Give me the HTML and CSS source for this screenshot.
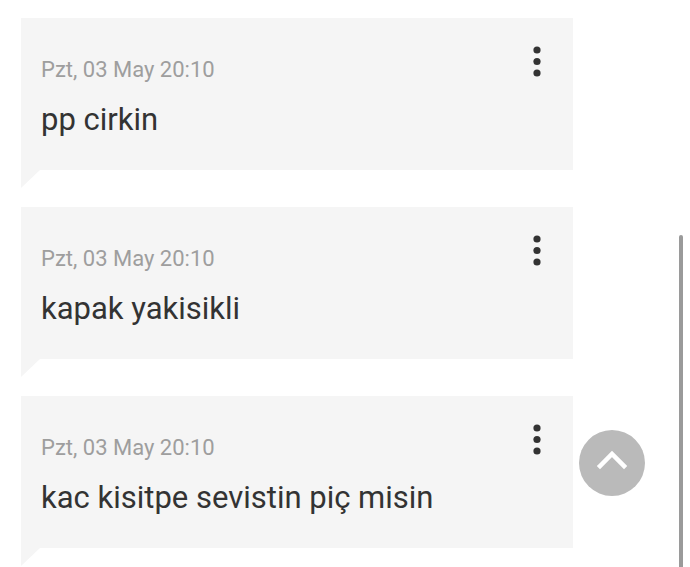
FILE: index.html
```html
<!DOCTYPE html>
<html lang="tr">
<head>
<meta charset="utf-8">
<link rel="stylesheet" href="styles.css">
</head>
<body>
<div class="list">
  <div class="item">
    <div class="card">
      <div class="head">
        <span class="date">Pzt, 03 May 20:10</span>
        <svg class="kebab" width="8" height="32" viewBox="0 0 8 32"><circle cx="4" cy="4" r="3.6"/><circle cx="4" cy="15.5" r="3.6"/><circle cx="4" cy="27" r="3.6"/></svg>
      </div>
      <div class="msg">pp cirkin</div>
    </div>
    <div class="tail"></div>
  </div>
  <div class="item">
    <div class="card">
      <div class="head">
        <span class="date">Pzt, 03 May 20:10</span>
        <svg class="kebab" width="8" height="32" viewBox="0 0 8 32"><circle cx="4" cy="4" r="3.6"/><circle cx="4" cy="15.5" r="3.6"/><circle cx="4" cy="27" r="3.6"/></svg>
      </div>
      <div class="msg">kapak yakisikli</div>
    </div>
    <div class="tail"></div>
  </div>
  <div class="item">
    <div class="card">
      <div class="head">
        <span class="date">Pzt, 03 May 20:10</span>
        <svg class="kebab" width="8" height="32" viewBox="0 0 8 32"><circle cx="4" cy="4" r="3.6"/><circle cx="4" cy="15.5" r="3.6"/><circle cx="4" cy="27" r="3.6"/></svg>
      </div>
      <div class="msg">kac kisitpe sevistin piç misin</div>
    </div>
    <div class="tail"></div>
  </div>
</div>
<div class="scrollbar"></div>
<button class="totop" aria-label="Yukarı">
  <svg width="30" height="20" viewBox="0 0 30 20"><path d="M3 16 L15 4 L27 16" fill="none" stroke="#fff" stroke-width="4.5" stroke-linecap="square"/></svg>
</button>
</body>
</html>
```
FILE: styles.css
```css
html, body {
  margin: 0;
  padding: 0;
  background: #fff;
  overflow: hidden;
  height: 567px;
}
body {
  font-family: Roboto, "Liberation Sans", sans-serif;
}
.list {
  display: flex;
  flex-direction: column;
  gap: 19px;
  padding: 18px 0 0 21px;
}
.item {
  width: 552px;
}
.card {
  background: #f5f5f5;
  height: 152px;
  box-sizing: border-box;
  padding: 25px 20px 0 20px;
}
.head {
  display: flex;
  justify-content: space-between;
  align-items: flex-start;
}
.date {
  font-size: 22px;
  line-height: 26px;
  color: #9e9e9e;
  margin-top: 14px;
}
.kebab {
  fill: #333;
  margin-right: 12px;
  margin-top: 3px;
}
.msg {
  font-size: 31px;
  line-height: 36px;
  color: #333;
  margin-top: 19px;
}
.tail {
  width: 19px;
  height: 18px;
  background: #f5f5f5;
  clip-path: polygon(0 0, 100% 0, 0 100%);
}
.scrollbar {
  position: fixed;
  left: 679px;
  top: 235px;
  width: 4px;
  height: 340px;
  background: #9a9a9a;
  border-radius: 2px 2px 0 0;
}
.totop {
  position: fixed;
  left: 579px;
  top: 430px;
  width: 66px;
  height: 66px;
  border-radius: 50%;
  border: 0;
  padding: 0;
  background: #bababa;
  display: flex;
  align-items: center;
  justify-content: center;
}
.totop svg {
  margin-top: -6px;
}
```
